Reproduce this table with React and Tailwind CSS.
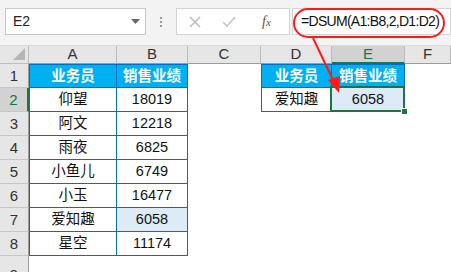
const font = { fontFamily: '"Liberation Sans", "Noto Sans CJK SC", sans-serif' };

const colW = ["w-[88px]", "w-[71px]", "w-[73px]", "w-[71px]", "w-[73px]", "flex-1"];
const letters = ["A", "B", "C", "D", "E", "F"];

const data = [
  ["业务员", "销售业绩", "", "业务员", "销售业绩"],
  ["仰望", "18019", "", "爱知趣", "6058"],
  ["阿文", "12218"],
  ["雨夜", "6825"],
  ["小鱼儿", "6749"],
  ["小玉", "16477"],
  ["爱知趣", "6058"],
  ["星空", "11174"],
];

function inTable(r, c) {
  if (c <= 1) return true;
  if ((c === 3 || c === 4) && r <= 1) return true;
  return false;
}

const Cell = ({ r, c, text }) => {
  const table = inTable(r, c);
  const head = table && r === 0;
  const selected = r === 1 && c === 4;
  const shaded = selected || (r === 6 && c === 1);
  let cls = `${colW[c]} h-[24px] relative flex items-center justify-center pt-[1px] text-[14.5px] `;
  if (table) {
    cls += "border-r border-b border-[#0070c0] ";
    if (c === 0 || c === 3) cls += "border-l ";
    if (r === 0) cls += "border-t ";
  }
  if (head) cls += "bg-[#00b0f0] text-white font-bold ";
  else if (shaded) cls += "bg-[#ddebf7] text-[#111] ";
  else cls += "text-[#111] ";
  return (
    <div className={cls}>
      {text}
      {selected && (
        <>
          <div className="absolute -left-[2px] -top-[2px] -right-[1px] -bottom-[1px] border-2 border-[#217346]" />
          <div className="absolute -right-[4px] -bottom-[4px] w-[7px] h-[7px] bg-[#217346] border border-white" />
        </>
      )}
    </div>
  );
};

export default function App() {
  return (
    <div className="relative w-[451px] h-[272px] overflow-hidden bg-white" style={font}>
      {/* formula bar */}
      <div className="h-[46px] bg-[#f3f3f3] border-b border-[#dadada] flex items-start pt-[8px] pl-[5px]">
        <div className="w-[141px] h-[27px] bg-white border border-[#c8c8c8] flex items-center pl-[7px] pr-[4px] text-[14px] text-[#222]">
          <span className="flex-1">E2</span>
          <svg width="9" height="6" viewBox="0 0 9 6" className="mr-[1px]">
            <path d="M0 0 L9 0 L4.5 5 Z" fill="#666" />
          </svg>
        </div>
        <div className="w-[30px] h-[27px] flex flex-col items-center justify-center gap-[2px]">
          <div className="w-[2px] h-[2px] bg-[#9a9a9a]" />
          <div className="w-[2px] h-[2px] bg-[#9a9a9a]" />
          <div className="w-[2px] h-[2px] bg-[#9a9a9a]" />
        </div>
        <div className="w-[114px] h-[27px] bg-white border border-[#d4d4d4] flex items-center pl-[12px] gap-[21px]">
          <svg width="12" height="12" viewBox="0 0 12 12">
            <path d="M1 1 L11 11 M11 1 L1 11" stroke="#bdbdbd" strokeWidth="1.6" />
          </svg>
          <svg width="14" height="12" viewBox="0 0 14 12">
            <path d="M1 6 L5 10 L13 1" stroke="#c4c4c4" strokeWidth="1.6" fill="none" />
          </svg>
          <span className="ml-[5px] text-[14px] italic text-[#555]" style={{ fontFamily: '"Liberation Serif", serif' }}>
            f<span className="text-[11px]">x</span>
          </span>
        </div>
        <div className="ml-[2px] flex-1 h-[27px] bg-white border border-[#d4d4d4] flex items-center pl-[8px] text-[14px] tracking-[-0.7px] text-[#111]">
          =DSUM(A1:B8,2,D1:D2)
        </div>
      </div>

      {/* column headers */}
      <div className="flex h-[18px]">
        <div className="w-[29px] bg-[#e6e6e6] border-r border-b border-[#bdbdbd] relative">
          <svg width="12" height="12" viewBox="0 0 12 12" className="absolute right-[3px] bottom-[3px]">
            <path d="M12 0 L12 12 L0 12 Z" fill="#b5b5b5" />
          </svg>
        </div>
        {letters.map((l, i) => (
          <div
            key={l}
            className={`${colW[i]} flex items-center justify-center text-[15px] border-r border-[#bdbdbd] ${
              i === 4
                ? "bg-[#d2d2d2] text-[#217346] border-b-2 border-b-[#217346]"
                : "bg-[#e6e6e6] text-[#333] border-b border-b-[#9b9b9b]"
            }`}
          >
            {l}
          </div>
        ))}
      </div>

      {/* rows */}
      {data.map((row, r) => (
        <div key={r} className="flex">
          <div
            className={`w-[29px] h-[24px] flex items-center justify-center pt-[2px] text-[15px] border-b border-[#c6c6c6] ${
              r === 1
                ? "bg-[#d2d2d2] text-[#217346] border-r-2 border-r-[#217346]"
                : "bg-[#e6e6e6] text-[#333] border-r border-r-[#9b9b9b]"
            }`}
          >
            {r + 1}
          </div>
          {letters.map((l, c) => (
            <Cell key={l} r={r} c={c} text={row[c] || ""} />
          ))}
        </div>
      ))}
      <div className="flex">
        <div className="w-[29px] h-[24px] flex items-start justify-center pt-[8px] text-[15px] bg-[#e6e6e6] text-[#333] border-r border-[#9b9b9b]">
          9
        </div>
      </div>

      {/* annotation */}
      <div className="absolute left-[293px] top-[8px] w-[152px] h-[30px] border-2 border-[#ff1a1a] rounded-full" />
      <svg className="absolute left-0 top-0 pointer-events-none" width="451" height="272">
        <line x1="313" y1="38" x2="334" y2="82" stroke="#ff1a1a" strokeWidth="2" />
        <path d="M339 93 L328 80 L340 76 Z" fill="#ff1a1a" />
      </svg>
    </div>
  );
}
